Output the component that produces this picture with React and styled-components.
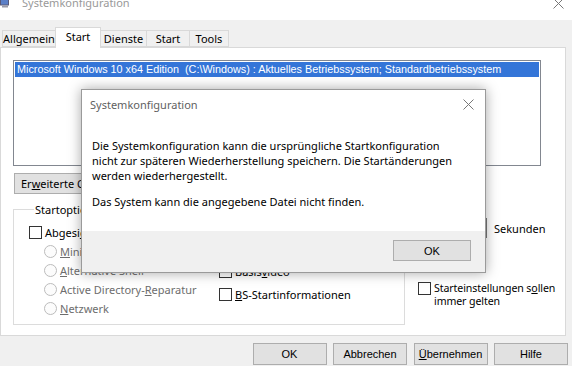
import React from 'react'
import styled, { createGlobalStyle } from 'styled-components'

const GlobalStyle = createGlobalStyle`
body {
  margin: 0;
  background: #f0f0f0;
  font-family: "Noto Sans", "Liberation Sans", sans-serif;
  font-size: 11px;
  color: #000;
}
`

const Window = styled.div`
position: relative;
width: 572px;
height: 366px;
overflow: hidden;
background: #f0f0f0;
`

const TitleBar = styled.div`
display: flex;
align-items: flex-start;
height: 20px;
background: #fff;
`

const TitleIcon = styled.svg`
width: 10px;
height: 9px;
margin-top: -1px;
`

const TitleText = styled.span`
margin: -5px 0 0 12px;
color: #999;
font-size: 11px;
flex: 1;
`

const CloseGlyph = styled.svg`
width: 11px;
height: 11px;
margin: -2px 8px 0 0;
`

const TabStrip = styled.div`
display: flex;
align-items: flex-end;
height: 27px;
padding-left: 3px;
box-sizing: border-box;
`

const Tab = styled.div`
display: flex;
align-items: center;
justify-content: center;
height: ${p => (p.active ? '21px' : '17px')};
margin-bottom: ${p => (p.active ? '-1px' : '0')};
background: ${p => (p.active ? '#fff' : '#f0f0f0')};
border: 1px solid #d9d9d9;
border-bottom: ${p => (p.active ? 'none' : '1px solid #d9d9d9')};
padding-bottom: ${p => (p.active ? '3px' : '0')};
margin-left: -1px;
z-index: ${p => (p.active ? 1 : 0)};
box-sizing: border-box;
width: ${p => p.w}px;
`

const Panel = styled.div`
width: 566px;
height: 289px;
background: #fff;
border: 1px solid #d9d9d9;
box-sizing: border-box;
padding: 12px 0 0 12px;
display: flex;
flex-direction: column;
`

const ListBox = styled.div`
width: 528px;
height: 106px;
border: 1px solid #828790;
box-sizing: border-box;
padding: 1px;
`

const ListItem = styled.div`
height: 15px;
line-height: 15px;
padding-left: 2px;
background: #3475d8;
color: #fff;
font-family: "Liberation Sans", sans-serif;
font-size: 10.8px;
white-space: nowrap;
overflow: hidden;
`

const Button = styled.button`
width: ${p => p.w || 74}px;
height: ${p => p.h || 22}px;
background: #e1e1e1;
border: 1px solid #adadad;
padding: 0;
font-family: ${p => (p.tahoma ? '"Liberation Sans", sans-serif' : '"Noto Sans", sans-serif')};
font-size: 11px;
color: #000;
text-align: ${p => (p.left ? 'left' : 'center')};
padding-left: ${p => (p.left ? '6px' : '0')};
white-space: nowrap;
overflow: hidden;
flex: none;
`

const AdvancedButton = styled(Button)`
margin: 7px 0 0 1px;
`

const OptionsRow = styled.div`
display: flex;
margin-top: 8px;
`

const GroupBox = styled.fieldset`
width: 392px;
height: 123px;
margin: 0;
padding: 5px 0 0 15px;
border: 1px solid #dcdcdc;
box-sizing: border-box;
display: flex;
gap: 20px;
flex: none;
`

const Legend = styled.legend`
padding: 0 1px;
margin-left: 5px;
`

const Column = styled.div`
display: flex;
flex-direction: column;
width: ${p => p.w}px;
`

const Option = styled.div`
display: flex;
align-items: center;
height: ${p => p.h || 19}px;
padding-left: ${p => p.indent || 0}px;
color: ${p => (p.disabled ? '#6d6d6d' : '#000')};
white-space: nowrap;
gap: 3px;
`

const Box = styled.span`
width: 13px;
height: 13px;
border: 1px solid #333;
background: #fff;
box-sizing: border-box;
flex: none;
`

const Radio = styled.span`
width: 13px;
height: 13px;
border: 1px solid #bcbcbc;
border-radius: 50%;
background: #fcfcfc;
box-sizing: border-box;
flex: none;
`

const SideColumn = styled.div`
display: flex;
flex-direction: column;
margin-left: 13px;
flex: none;
width: 145px;
`

const TimeoutLabel = styled.div`
height: 14px;
margin-top: -3px;
`

const TimeoutRow = styled.div`
display: flex;
align-items: center;
gap: 7px;
margin-top: 5px;
`

const TimeoutInput = styled.div`
width: 69px;
height: 20px;
border: 1px solid #7a7a7a;
box-sizing: border-box;
background: #fff;
`

const PersistOption = styled.div`
display: flex;
align-items: flex-start;
gap: 3px;
margin-top: 44px;
line-height: 13px;
white-space: nowrap;
`

const PersistLabel = styled.span`
font-size: 10.6px;
letter-spacing: -0.1px;
`

const Footer = styled.div`
display: flex;
justify-content: flex-end;
gap: 6.5px;
padding: 7px 4px 0 0;
`

const Dialog = styled.div`
position: absolute;
left: 81px;
top: 89px;
width: 405px;
height: 184px;
background: #fff;
border: 1px solid #9a9a9a;
box-sizing: border-box;
box-shadow: 0 0 12px rgba(0, 0, 0, 0.35);
display: flex;
flex-direction: column;
`

const DialogHeader = styled.div`
display: flex;
align-items: center;
justify-content: space-between;
height: 28px;
padding: 0 11px 0 8px;
color: #5f5f5f;
`

const DialogBody = styled.div`
flex: 1;
padding: 20px 0 0 10px;
line-height: 15px;
`

const Paragraph = styled.p`
margin: 0 0 11px 0;
`

const DialogFooter = styled.div`
height: 41px;
background: #f0f0f0;
display: flex;
justify-content: flex-end;
align-items: flex-start;
padding: 9px 14px 0 0;
box-sizing: border-box;
`

const Key = styled.span`
text-decoration: underline;
`

const X = ({ size = 11, color = '#777' }) => (
    <svg width={size} height={size} viewBox="0 0 11 11">
        <path d="M0.5 0.5 L10.5 10.5 M10.5 0.5 L0.5 10.5" stroke={color} strokeWidth="1" fill="none" />
    </svg>
)

const App = () => {
    return (
        <Window>
            <GlobalStyle />
            <TitleBar>
                <TitleIcon viewBox="0 0 10 9">
                    <rect x="0.5" y="0" width="8" height="6" fill="#5b7fc7" stroke="#5a5a78" strokeWidth="1" />
                    <rect x="2" y="6.5" width="6" height="2" fill="#9a9aa8" />
                </TitleIcon>
                <TitleText>Systemkonfiguration</TitleText>
                <CloseGlyph viewBox="0 0 11 11">
                    <path d="M0.5 0.5 L10.5 10.5 M10.5 0.5 L0.5 10.5" stroke="#777" strokeWidth="1" fill="none" />
                </CloseGlyph>
            </TitleBar>
            <TabStrip>
                <Tab w={54}>Allgemein</Tab>
                <Tab w={46} active>Start</Tab>
                <Tab w={47}>Dienste</Tab>
                <Tab w={44}>Start</Tab>
                <Tab w={40}>Tools</Tab>
            </TabStrip>
            <Panel>
                <ListBox>
                    <ListItem>Microsoft Windows 10 x64 Edition&nbsp; (C:\Windows) : Aktuelles Betriebssystem; Standardbetriebssystem</ListItem>
                </ListBox>
                <AdvancedButton w={112} h={21} left>Er<Key>w</Key>eiterte Optionen...</AdvancedButton>
                <OptionsRow>
                    <GroupBox>
                        <Legend>Startoptionen</Legend>
                        <Column w={170}>
                            <Option h={20}><Box /><span>Abgesi<Key>c</Key>herter Start</span></Option>
                            <Option indent={15} disabled><Radio /><span><Key>M</Key>inimal</span></Option>
                            <Option indent={15} disabled><Radio /><span><Key>A</Key>lternative Shell</span></Option>
                            <Option indent={15} disabled><Radio /><span>Active Directory-<Key>R</Key>eparatur</span></Option>
                            <Option indent={15} disabled><Radio /><span><Key>N</Key>etzwerk</span></Option>
                        </Column>
                        <Column w={170}>
                            <Option h={20}><Box /><span>Kein <Key>G</Key>UI-Start</span></Option>
                            <Option><Box /><span>Start<Key>p</Key>rotokollierung</span></Option>
                            <Option h={21}><Box /><span>Basis<Key>v</Key>ideo</span></Option>
                            <Option h={24}><Box /><span><Key>B</Key>S-Startinformationen</span></Option>
                        </Column>
                    </GroupBox>
                    <SideColumn>
                        <TimeoutLabel><Key>T</Key>imeout:</TimeoutLabel>
                        <TimeoutRow>
                            <TimeoutInput />
                            <span>Sekunden</span>
                        </TimeoutRow>
                        <PersistOption>
                            <Box />
                            <PersistLabel>Starteinstellungen s<Key>o</Key>llen<br />immer gelten</PersistLabel>
                        </PersistOption>
                    </SideColumn>
                </OptionsRow>
            </Panel>
            <Footer>
                <Button tahoma>OK</Button>
                <Button tahoma>Abbrechen</Button>
                <Button tahoma><Key>Ü</Key>bernehmen</Button>
                <Button tahoma>Hilfe</Button>
            </Footer>
            <Dialog>
                <DialogHeader>
                    <span>Systemkonfiguration</span>
                    <X />
                </DialogHeader>
                <DialogBody>
                    <Paragraph>
                        Die Systemkonfiguration kann die ursprüngliche Startkonfiguration<br />
                        nicht zur späteren Wiederherstellung speichern. Die Startänderungen<br />
                        werden wiederhergestellt.
                    </Paragraph>
                    <Paragraph>Das System kann die angegebene Datei nicht finden.</Paragraph>
                </DialogBody>
                <DialogFooter>
                    <Button w={78} h={21} tahoma>OK</Button>
                </DialogFooter>
            </Dialog>
        </Window>
    )
}

export default App
